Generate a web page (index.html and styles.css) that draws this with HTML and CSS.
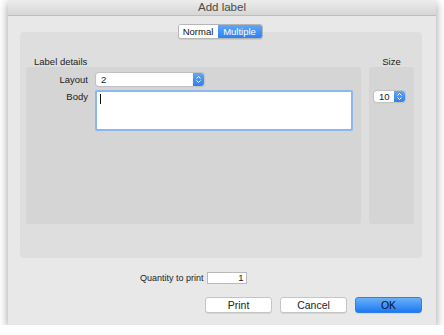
FILE: index.html
```html
<!DOCTYPE html>
<html lang="en">
<head>
<meta charset="UTF-8">
<title>Add label</title>
<link rel="stylesheet" href="styles.css">
</head>
<body>
<div class="window">
  <div class="titlebar">Add label</div>
  <div class="content">
    <div class="tabs">
      <span class="tab">Normal</span>
      <span class="tab active">Multiple</span>
    </div>
    <div class="panel">
      <div class="groups">
        <div class="group details">
          <div class="group-title">Label details</div>
          <div class="group-box form">
            <label>Layout</label>
            <div class="popup wide"><span class="value">2</span><span class="arrows"><svg width="7" height="9" viewBox="0 0 7 9"><path d="M1.5 3.5 L3.5 1.5 L5.5 3.5 M1.5 5.5 L3.5 7.5 L5.5 5.5" fill="none" stroke="#fff" stroke-width="1"/></svg></span></div>
            <label>Body</label>
            <div class="textbox"><span class="caret"></span></div>
          </div>
        </div>
        <div class="group size">
          <div class="group-title">Size</div>
          <div class="group-box size-box">
            <div class="popup small"><span class="value">10</span><span class="arrows"><svg width="7" height="9" viewBox="0 0 7 9"><path d="M1.5 3.5 L3.5 1.5 L5.5 3.5 M1.5 5.5 L3.5 7.5 L5.5 5.5" fill="none" stroke="#fff" stroke-width="1"/></svg></span></div>
          </div>
        </div>
      </div>
    </div>
    <div class="quantity">
      <label>Quantity to print</label>
      <div class="field">1</div>
    </div>
    <div class="buttons">
      <button>Print</button>
      <button>Cancel</button>
      <button class="default">OK</button>
    </div>
  </div>
</div>
</body>
</html>
```

FILE: styles.css
```css
body { margin: 0; background: #fff; font-family: "Liberation Sans", Arial, sans-serif; color: #222; }

.window {
  margin-left: 8px;
  width: 428px;
  height: 325px;
  background: #e8e8e8;
  box-shadow: 0 3px 9px rgba(0, 0, 0, 0.4);
  display: flex;
  flex-direction: column;
}

.titlebar {
  height: 15px;
  line-height: 15px;
  border-bottom: 1px solid #bdbdbd;
  background: linear-gradient(#ececec, #d6d6d6);
  text-align: center;
  font-size: 11.5px;
  color: #4a4a4a;
}

.content { padding: 0 14px 0 12px; display: flex; flex-direction: column; }

/* Segmented control */
.tabs {
  align-self: center;
  margin: 8px 0 0 -2px;
  display: flex;
  height: 13px;
  border: 1px solid #b5b5b5;
  border-radius: 3px;
  overflow: hidden;
  position: relative;
  z-index: 1;
  box-shadow: 0 1px 0 rgba(0,0,0,0.08);
}
.tab { font-size: 9.5px; line-height: 13px; background: #fff; color: #111; width: 39px; text-align: center; }
.tab.active { background: linear-gradient(#5fa7f8, #2a82f4); color: #fff; width: 44px; }

.panel {
  margin-top: -7px;
  height: 226px;
  background: #dedede;
  border-radius: 4px;
  padding: 25px 8px 0 6px;
  box-sizing: border-box;
}

.groups { display: flex; gap: 8px; }
.group-title { font-size: 9.5px; height: 10px; line-height: 10px; color: #222; }
.details { width: 335px; }
.details .group-title { padding-left: 8px; }
.size { width: 45px; }
.size .group-title { text-align: center; }

.group-box { height: 157px; background: #d5d5d5; border-radius: 3px; box-sizing: border-box; }

.form {
  display: grid;
  grid-template-columns: 62px 1fr;
  grid-template-rows: 13px 41px;
  column-gap: 8px;
  row-gap: 4px;
  padding: 6px 8px 0 0;
  align-content: start;
}
.form label { font-size: 9.5px; text-align: right; line-height: 13px; }

.size-box { padding: 24px 0 0 5px; }

.popup {
  display: flex;
  background: #fff;
  border-radius: 3px;
  box-shadow: 0 0 0 1px #c2c2c2, 0 1px 1px rgba(0,0,0,0.15);
  overflow: hidden;
  font-size: 9.5px;
}
.popup .value { flex: 1; padding-left: 5px; }
.popup .arrows { width: 11px; background: linear-gradient(#5fa7f8, #2a82f4); display: flex; align-items: center; justify-content: center; }
.popup.wide { width: 108px; height: 13px; line-height: 13px; }
.popup.small { width: 31px; height: 11px; line-height: 11px; }

.textbox {
  margin-left: -1px;
  width: 258px;
  height: 41px;
  background: #fff;
  border: 2px solid #8bb6ee;
  border-radius: 2px;
  box-sizing: border-box;
  padding: 2px 3px;
}
.caret { display: block; width: 1px; height: 10px; background: #111; }

.quantity { display: flex; align-items: center; margin: 14px 0 0 120px; }
.quantity label { font-size: 9px; margin-right: 3px; }
.field {
  width: 40px;
  height: 12px;
  background: #fff;
  border: 1px solid #b9b9b9;
  box-sizing: border-box;
  font-size: 9.5px;
  line-height: 10px;
  text-align: right;
  padding-right: 2px;
}

.buttons { display: flex; justify-content: flex-end; gap: 8px; margin-top: 13px; }
.buttons button {
  width: 67px;
  height: 16px;
  padding: 0;
  font-family: inherit;
  font-size: 10.5px;
  color: #222;
  background: #fff;
  border: 1px solid #c4c4c4;
  border-radius: 3px;
  box-shadow: 0 1px 0 rgba(0,0,0,0.08);
}
.buttons button.default { background: linear-gradient(#6ab0f9, #1d79f3); border-color: #2e7fe6; color: #111; }
```
